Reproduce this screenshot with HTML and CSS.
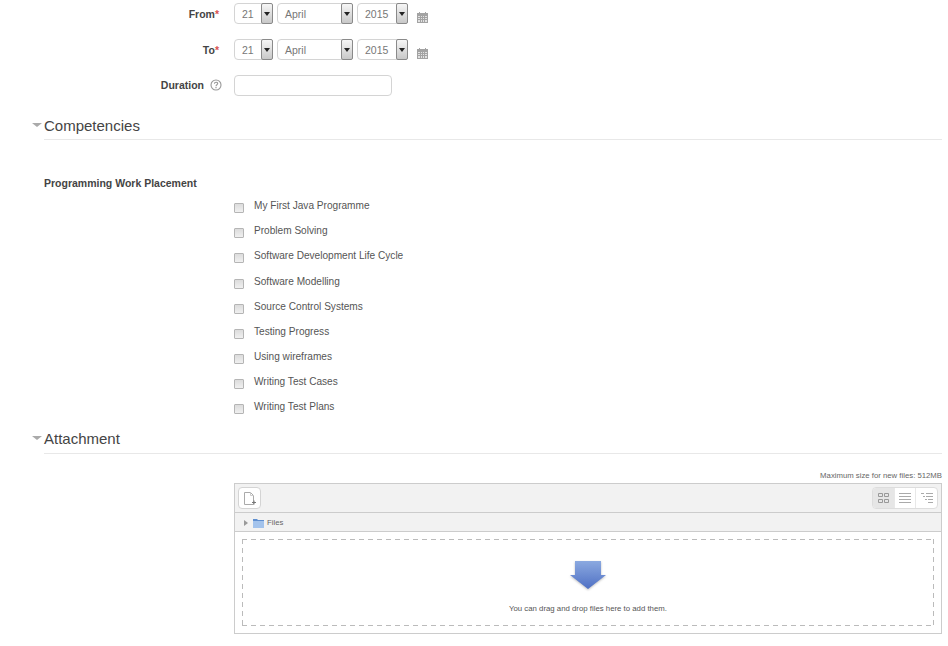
FILE: index.html
```html
<!DOCTYPE html>
<html lang="en">
<head>
<meta charset="utf-8">
<title>Placement form</title>
<link rel="stylesheet" href="styles.css">
</head>
<body>
<form class="page">
  <div class="row row-date">
    <label class="label">From<span class="req">*</span></label>
    <div class="controls">
      <div class="select s-day"><span class="val">21</span><span class="btn"><i></i></span></div>
      <div class="select s-month"><span class="val">April</span><span class="btn"><i></i></span></div>
      <div class="select s-year"><span class="val">2015</span><span class="btn"><i></i></span></div>
      <svg class="cal" width="11" height="11" viewBox="0 0 11 11"><path d="M0 1h11v10H0z" fill="#a3a3a3"/><path d="M2 0h1v2H2zM8 0h1v2H8z" fill="#a3a3a3"/><path d="M1 4h2v1H1zM4 4h1v1H4zM6 4h1v1H6zM8 4h2v1H8zM1 6h2v1H1zM4 6h1v1H4zM6 6h1v1H6zM8 6h2v1H8zM1 8h2v2H1zM4 8h1v2H4zM6 8h1v2H6zM8 8h2v2H8z" fill="#e2e2e2"/></svg>
    </div>
  </div>
  <div class="row row-date">
    <label class="label">To<span class="req">*</span></label>
    <div class="controls">
      <div class="select s-day"><span class="val">21</span><span class="btn"><i></i></span></div>
      <div class="select s-month"><span class="val">April</span><span class="btn"><i></i></span></div>
      <div class="select s-year"><span class="val">2015</span><span class="btn"><i></i></span></div>
      <svg class="cal" width="11" height="11" viewBox="0 0 11 11"><path d="M0 1h11v10H0z" fill="#a3a3a3"/><path d="M2 0h1v2H2zM8 0h1v2H8z" fill="#a3a3a3"/><path d="M1 4h2v1H1zM4 4h1v1H4zM6 4h1v1H6zM8 4h2v1H8zM1 6h2v1H1zM4 6h1v1H4zM6 6h1v1H6zM8 6h2v1H8zM1 8h2v2H1zM4 8h1v2H4zM6 8h1v2H6zM8 8h2v2H8z" fill="#e2e2e2"/></svg>
    </div>
  </div>
  <div class="row row-duration">
    <label class="label">Duration<svg class="help" width="12" height="12" viewBox="0 0 12 12"><circle cx="6" cy="6" r="5" fill="none" stroke="#999" stroke-width="1.1"/><path d="M4.4 4.8c0-2.1 3.3-2.1 3.3-.2 0 1.2-1.7 1.2-1.7 2.6" fill="none" stroke="#999" stroke-width="1.1"/><path d="M5.4 8h1.2v1.2H5.4z" fill="#999"/></svg></label>
    <div class="text-input"></div>
  </div>

  <div class="section section-comp">
    <h2 class="legend"><i class="caret"></i>Competencies</h2>
    <h3 class="group">Programming Work Placement</h3>
    <ul class="checks">
      <li><span class="box"></span>My First Java Programme</li>
      <li><span class="box"></span>Problem Solving</li>
      <li><span class="box"></span>Software Development Life Cycle</li>
      <li><span class="box"></span>Software Modelling</li>
      <li><span class="box"></span>Source Control Systems</li>
      <li><span class="box"></span>Testing Progress</li>
      <li><span class="box"></span>Using wireframes</li>
      <li><span class="box"></span>Writing Test Cases</li>
      <li><span class="box"></span>Writing Test Plans</li>
    </ul>
  </div>

  <div class="section section-att">
    <h2 class="legend"><i class="caret"></i>Attachment</h2>
    <div class="picker-wrap">
      <p class="maxsize">Maximum size for new files: 512MB</p>
      <div class="picker">
        <div class="toolbar">
          <span class="add"><svg width="12" height="13" viewBox="0 0 12 13"><path d="M.5.5h6l3 3v9h-9z" fill="#fff" stroke="#aaa"/><path d="M6.500.5v3h3" fill="none" stroke="#ccc"/><path d="M8 10.500h4M10 8.500v4" stroke="#777"/></svg></span>
          <div class="views">
            <span class="view active"><svg width="11" height="10" viewBox="0 0 11 10"><path d="M.5.5h4v3h-4zM6.500.5h4v3h-4zM.5 6.500h4v3h-4zM6.500 6.500h4v3h-4z" fill="none" stroke="#999"/></svg></span>
            <span class="view"><svg width="12" height="10" viewBox="0 0 12 10"><path d="M0 .5h12M0 3.500h12M0 6.500h12M0 9.500h12" stroke="#aaa"/></svg></span>
            <span class="view"><svg width="12" height="10" viewBox="0 0 12 10"><path d="M0 .5h3M5 .500h7M2 3.500h2M5 3.500h7M4 6.500h2M7 6.500h5M7 9.500h5" stroke="#aaa"/></svg></span>
          </div>
        </div>
        <div class="path">
          <i class="tri"></i>
          <svg class="folder" width="11" height="10" viewBox="0 0 11 10"><path d="M0 1h4l1 1h6v8H0z" fill="#5f8fd0"/><path d="M0 3h11v7H0z" fill="#a3c3ec"/></svg>
          <span>Files</span>
        </div>
        <div class="drop-area">
          <div class="drop">
            <svg class="arrow" width="36" height="28" viewBox="0 0 36 28"><defs><linearGradient id="ag" x1="0" y1="0" x2="0" y2="1"><stop offset="0" stop-color="#8ba9e0"/><stop offset="1" stop-color="#4f70c4"/></linearGradient></defs><path d="M5 0h26v14h5l-18 14-18-14h5z" fill="url(#ag)"/></svg>
            <p class="drop-text">You can drag and drop files here to add them.</p>
          </div>
        </div>
      </div>
    </div>
  </div>
</form>
</body>
</html>
```
FILE: styles.css
```css
* { box-sizing: border-box; }
html, body { margin: 0; padding: 0; background: #fff; }
body { height: 646px; overflow: hidden; font-family: "Liberation Sans", Arial, sans-serif; font-size: 10.5px; color: #555; }
.page { display: block; padding: 3px 6px 0 0; }
.row { display: flex; }
.row-date { height: 36px; }
.row-duration { height: 21px; }
.label { width: 234px; padding-right: 15px; display: flex; justify-content: flex-end; align-items: flex-start; padding-top: 5px; font-weight: 700; color: #444; line-height: 13px; }
.req { color: #d9534f; }
.help { margin-left: 6px; margin-right: -1px; }
.row-duration .label { padding-right: 13px; padding-top: 4px; }
.controls { display: flex; align-items: flex-start; }
.select { height: 21px; display: flex; border: 1px solid #d4d4d4; border-radius: 4px; background: #fff; margin-right: 4px; }
.s-day { width: 39px; }
.s-month { width: 76px; margin-right: 4px; }
.s-year { width: 51px; margin-right: 9px; }
.val { flex: 1; padding: 4px 0 0 7px; line-height: 13px; color: #777; }
.btn { width: 12px; margin: -1px -1px -1px 0; border: 1px solid #8a8a8a; border-radius: 2px; background: linear-gradient(#f6f6f6, #c8c8c8); display: flex; align-items: center; justify-content: center; }
.btn i { width: 0; height: 0; border: 3px solid transparent; border-top: 4px solid #222; border-bottom: 0; }
.cal { margin-top: 9px; }
.text-input { width: 158px; height: 21px; border: 1px solid #d4d4d4; border-radius: 4px; background: #fff; }
.legend { margin: 0 0 0 44px; height: 32px; padding-top: 9px; font-size: 15px; line-height: 17px; font-weight: 400; color: #444; border-bottom: 1px solid #e8e8e8; position: relative; }
.caret { position: absolute; left: -12px; top: 15px; width: 0; height: 0; border: 5px solid transparent; border-top: 4px solid #aaa; border-bottom: 0; }
.section-comp { padding-top: 12px; }
.group { margin: 37px 0 0 44px; font-size: 10.5px; line-height: 13px; font-weight: 700; color: #444; }
.checks { list-style: none; margin: 9.1px 0 0 234px; padding: 0; }
.checks li { height: 25.15px; display: flex; align-items: flex-start; line-height: 13px; font-size: 10.1px; color: #555; }
.box { width: 10px; height: 10px; margin: 4px 10px 0 0; border: 1px solid #b5b5b5; border-radius: 1px; background: linear-gradient(#dcdcdc, #f0f0f0); }
.section-att .legend { height: 29px; padding-top: 5px; }
.section-att .caret { top: 11px; }
.picker-wrap { margin-left: 234px; }
.maxsize { margin: 16px 0 0; height: 13px; text-align: right; font-size: 7.75px; line-height: 12px; color: #666; }
.picker { height: 151px; border: 1px solid #ccc; display: flex; flex-direction: column; }
.toolbar { height: 29px; background: #f2f2f2; border-bottom: 1px solid #ccc; display: flex; justify-content: space-between; padding: 3px 3px 0 3px; }
.add { width: 23px; height: 22px; border: 1px solid #d4d4d4; border-radius: 4px; background: #fff; display: flex; align-items: center; justify-content: center; }
.views { display: flex; width: 66px; height: 22px; border: 1px solid #ddd; border-radius: 4px; background: #fff; overflow: hidden; }
.view { flex: 1; display: flex; align-items: center; justify-content: center; border-right: 1px solid #e8e8e8; }
.view:last-child { border-right: 0; }
.view.active { background: #e6e6e6; }
.path { height: 19px; background: #f2f2f2; border-bottom: 1px solid #ccc; display: flex; align-items: center; padding: 1px 0 0 9px; font-size: 7.75px; color: #666; }
.tri { width: 0; height: 0; border: 3px solid transparent; border-left: 4px solid #999; border-right: 0; margin-right: 5px; }
.folder { margin-right: 3px; }
.drop-area { flex: 1; padding: 7px 7px; }
.drop { height: 87px; display: flex; flex-direction: column; align-items: center; padding-top: 22px;
  background:
    repeating-linear-gradient(90deg, #bbb 0 5px, transparent 5px 9px) top left / 100% 1px no-repeat,
    repeating-linear-gradient(90deg, #bbb 0 5px, transparent 5px 9px) bottom left / 100% 1px no-repeat,
    repeating-linear-gradient(180deg, #bbb 0 5px, transparent 5px 9px) top left / 1px 100% no-repeat,
    repeating-linear-gradient(180deg, #bbb 0 5px, transparent 5px 9px) top right / 1px 100% no-repeat;
}
.arrow { display: block; filter: drop-shadow(0 1px 1px rgba(0,0,0,.25)); }
.drop-text { margin: 15px 0 0; font-size: 7.8px; line-height: 10px; color: #555; }
```
